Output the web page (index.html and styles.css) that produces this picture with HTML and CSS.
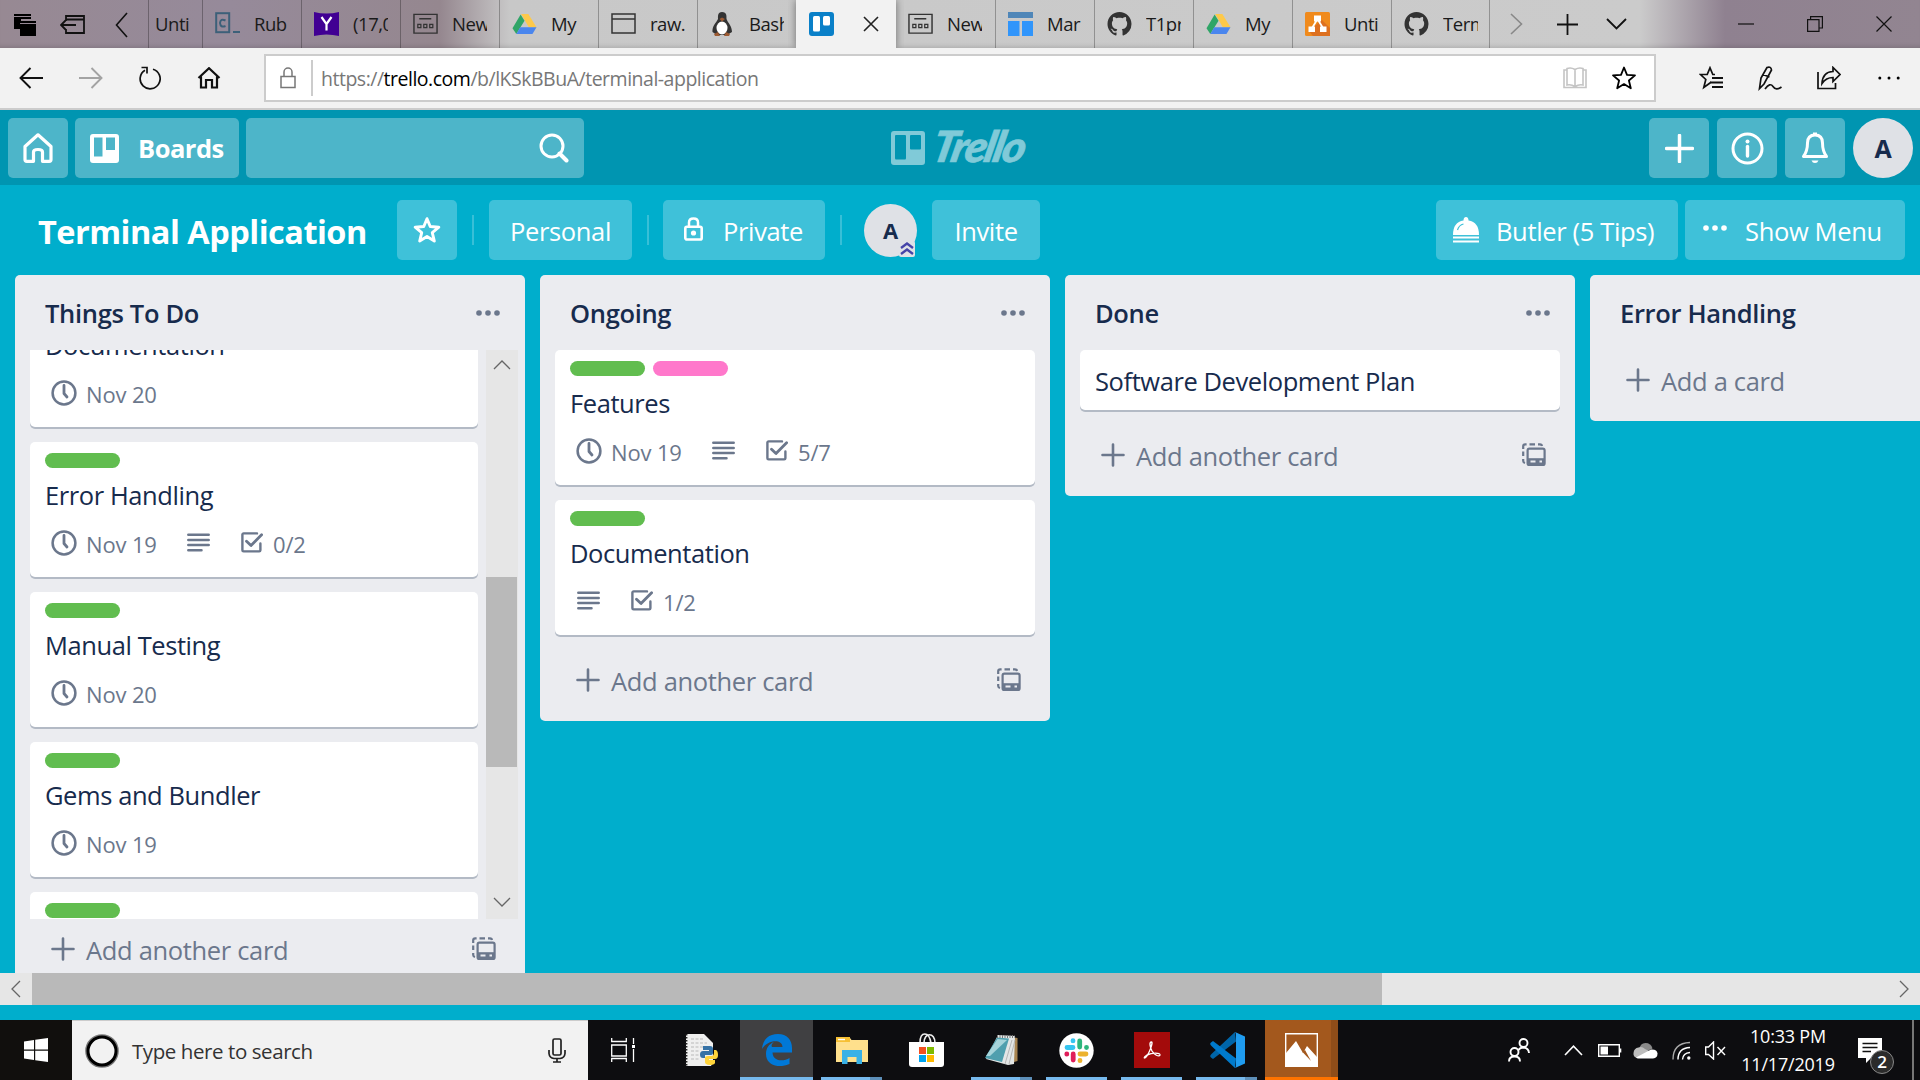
FILE: index.html
```html
<!DOCTYPE html>
<html lang="en">
<head>
<meta charset="utf-8">
<title>Terminal Application | Trello</title>
<link rel="stylesheet" href="styles.css">
</head>
<body>
<svg class="defs" width="0" height="0" aria-hidden="true">
  <symbol id="clock" viewBox="0 0 26 26"><circle cx="13" cy="13" r="11.4" fill="none" stroke="currentColor" stroke-width="2.5"/><path d="M13 5.5V13.5L16 17" fill="none" stroke="currentColor" stroke-width="2.8" stroke-linecap="round" stroke-linejoin="round"/></symbol>
  <symbol id="desc" viewBox="0 0 23 19"><path d="M1.3 1.7H21.7M1.3 6.9H21.7M1.3 12H21.7M1.3 17.2H14.5" fill="none" stroke="currentColor" stroke-width="2.5" stroke-linecap="round"/></symbol>
  <symbol id="check" viewBox="0 0 22 21"><path d="M16 1.4H2.6A1.2 1.2 0 0 0 1.4 2.6V18.2A1.2 1.2 0 0 0 2.6 19.4H18.2A1.2 1.2 0 0 0 19.4 18.2V11.5" fill="none" stroke="currentColor" stroke-width="2.4" stroke-linecap="round"/><path d="M5.5 9.2L10 13.6L20.6 2.8" fill="none" stroke="currentColor" stroke-width="2.8" stroke-linecap="round" stroke-linejoin="round"/></symbol>
  <symbol id="dots" viewBox="0 0 24 6"><circle cx="3" cy="3" r="2.8"/><circle cx="12" cy="3" r="2.8"/><circle cx="21" cy="3" r="2.8"/></symbol>
  <symbol id="plus" viewBox="0 0 24 24"><path d="M12 1.5V22.5M1.5 12H22.5" fill="none" stroke="currentColor" stroke-width="2.6" stroke-linecap="round"/></symbol>
  <symbol id="template" viewBox="0 0 24 24"><path d="M1.2 6V3.2Q1.2 1.3 3.2 1.3H4.6M7.5 1.3H13M16 1.3H18Q19.8 1.3 20 3M1.2 8.5V13M1.2 16V18Q1.3 19.6 3 20" fill="none" stroke="currentColor" stroke-width="2.2"/><rect x="5.6" y="5.6" width="17" height="16.4" rx="1.8" fill="none" stroke="currentColor" stroke-width="2.2"/><path d="M5.6 15.2H22.6V22H5.6Z" fill="currentColor"/><path d="M8.5 18.6H13.5M17.5 18.6H20" stroke="#ebecf0" stroke-width="2"/></symbol>
  <symbol id="newtab" viewBox="0 0 26 24"><path d="M1 2H25V21.500H1ZM6.500 6.500H19" fill="none" stroke="#333" stroke-width="1.500"/><path d="M5 12.500H8.200V15.700H5ZM11.200 12.500H14.400V15.700H11.200ZM17.400 12.500H20.600V15.700H17.400Z" fill="none" stroke="#333" stroke-width="1.300"/></symbol>
  <symbol id="drive" viewBox="0 0 26 24"><path d="M9.500 1.500H17L25.500 15.500H17.500Z" fill="#fdc94b"/><path d="M9 2L.5 16.500L4.500 22.500L13 8.500Z" fill="#2fa567"/><path d="M8.600 15.500H25.500L21.300 22.500H4.500Z" fill="#4a86ee"/></symbol>
  <symbol id="github" viewBox="0 0 16 16"><path fill="#333" d="M8 0C3.580 0 0 3.580 0 8c0 3.540 2.290 6.530 5.470 7.590.4.070.55-.17.55-.38v-1.490c-2.010.37-2.530-.49-2.690-.94-.09-.23-.48-.94-.82-1.130-.28-.15-.68-.52-.01-.53.63-.01 1.080.58 1.230.82.72 1.210 1.870.87 2.330.66.07-.52.28-.87.51-1.070-1.780-.2-3.640-.89-3.640-3.950 0-.87.31-1.590.82-2.150-.08-.2-.36-1.020.08-2.120 0 0 .67-.21 2.200.82.64-.18 1.320-.27 2-.27s1.360.09 2 .27c1.530-1.040 2.200-.82 2.200-.82.44 1.100.16 1.920.08 2.120.51.56.82 1.270.82 2.150 0 3.070-1.870 3.750-3.650 3.950.29.25.54.73.54 1.480v2.200c0 .21.150.46.550.38A8.010 8.010 0 0 0 16 8c0-4.420-3.580-8-8-8z"/></symbol>
  <symbol id="star" viewBox="0 0 26 26"><path d="M13 2.500L16 9.800L24 10.400L17.900 15.500L19.800 23.300L13 19.100L6.200 23.300L8.100 15.500L2 10.400L10 9.800Z" fill="none" stroke="currentColor" stroke-linejoin="round"/></symbol>
</svg>

<div class="screen">
  <div class="tabbar">
    <div class="tab-tools">
      <svg width="22" height="22" viewBox="0 0 22 22"><path d="M0 0H17V5H7V15H0Z"/><path d="M6 7H22V22H6Z"/><path d="M6 9.500H22M0 2.500H17" stroke="#978995" stroke-width="1"/></svg>
      <svg width="25" height="20" viewBox="0 0 25 20"><path d="M6 6V1H24V18H6V14M6 4.500H24M1 10H16M5.500 5.500L1 10L5.500 14.500" fill="none" stroke="#111" stroke-width="1.800"/></svg>
      <svg width="13" height="26" viewBox="0 0 13 26"><path d="M12 1L1.500 13L12 25" fill="none" stroke="#111" stroke-width="1.600"/></svg>
    </div>
    <div class="tab tab-first"><span class="tab-text">Unti</span></div>
    <div class="tab"><svg width="25" height="24" viewBox="0 0 25 24"><rect x="1.200" y="1.200" width="13" height="19" fill="none" stroke="#3c6079" stroke-width="2"/><path d="M10.500 8.500Q5.500 6 5 11Q5.500 16 10.500 14M18 20H25" fill="none" stroke="#3c6079" stroke-width="2"/></svg><span class="tab-text">Rub</span></div>
    <div class="tab"><svg width="25" height="24" viewBox="0 0 25 24"><path d="M0 0Q12.500 3 25 0V24Q12.500 21 0 24Z" fill="#410093"/><path d="M7.500 5L12.500 12V18.500M17.500 5L12.500 12" fill="none" stroke="#fff" stroke-width="2.200"/></svg><span class="tab-text">(17,0</span></div>
    <div class="tab"><svg width="25" height="24"><use href="#newtab"/></svg><span class="tab-text">New</span></div>
    <div class="tab"><svg width="25" height="24"><use href="#drive"/></svg><span class="tab-text">My</span></div>
    <div class="tab"><svg width="25" height="24" viewBox="0 0 25 24"><path d="M1 2H24V21H1ZM1 7H24" fill="none" stroke="#333" stroke-width="1.500"/></svg><span class="tab-text">raw.</span></div>
    <div class="tab"><svg width="25" height="24" viewBox="0 0 25 24"><path d="M12 0C7.500 0 8 4 8 7C6 11 2 14 2.500 20L7 23H17L22 20C22 14 18 11 16.500 7C16.500 4 17 0 12 0Z" fill="#333"/><ellipse cx="12" cy="16" rx="5.500" ry="6.500" fill="#fff"/><path d="M9.500 7L12 5.500L15 7L12 9.500ZM4 22L8 20L10 24H5ZM20 22L16 20L14 24H19Z" fill="#9c5a32"/></svg><span class="tab-text">Bash</span></div>
    <div class="tab tab-active"><svg width="25" height="24" viewBox="0 0 25 24"><rect width="25" height="24" rx="3" fill="#0a80c8"/><rect x="4" y="4" width="7" height="15.500" rx="1.500" fill="#fff"/><rect x="14" y="4" width="7" height="9.500" rx="1.500" fill="#fff"/></svg><svg class="tab-close" width="16" height="16" viewBox="0 0 16 16"><path d="M1 1L15 15M15 1L1 15" stroke="#222" stroke-width="1.600"/></svg></div>
    <div class="tab"><svg width="25" height="24"><use href="#newtab"/></svg><span class="tab-text">New</span></div>
    <div class="tab"><svg width="25" height="24" viewBox="0 0 25 24"><path d="M0 0H25V6H0Z" fill="#4f86b8"/><path d="M0 9H11.500V24H0ZM14 9H25V24H14Z" fill="#3095fb"/></svg><span class="tab-text">Mar</span></div>
    <div class="tab"><svg width="25" height="24"><use href="#github"/></svg><span class="tab-text">T1pr</span></div>
    <div class="tab"><svg width="25" height="24"><use href="#drive"/></svg><span class="tab-text">My</span></div>
    <div class="tab"><svg width="25" height="24" viewBox="0 0 25 24"><rect width="25" height="24" rx="1.500" fill="#f08a1c"/><path d="M17 8L25 16V24H8L4 19Z" fill="#dd7020"/><path d="M12.500 7L6.500 17M12.500 7L18.500 17" stroke="#fff" stroke-width="1.800"/><path d="M9 3.500H16V9.500H9ZM3.500 14.500H10V20H3.500ZM15 14.500H21.500V20H15Z" fill="#fff"/></svg><span class="tab-text">Unti</span></div>
    <div class="tab tab-last"><svg width="25" height="24"><use href="#github"/></svg><span class="tab-text">Term</span></div>
    <div class="tab-end">
      <svg width="13" height="22" viewBox="0 0 13 22"><path d="M1 1L11.500 11L1 21" fill="none" stroke="#888" stroke-width="1.600"/></svg>
      <svg width="21" height="21" viewBox="0 0 21 21"><path d="M10.500 0V21M0 10.500H21" stroke="#111" stroke-width="1.800"/></svg>
      <svg width="21" height="12" viewBox="0 0 21 12"><path d="M1 1L10.500 10.500L20 1" fill="none" stroke="#111" stroke-width="1.800"/></svg>
    </div>
    <div class="window-buttons">
      <svg width="16" height="16" viewBox="0 0 16 16"><path d="M0 8H16" stroke="#111" stroke-width="1.200"/></svg>
      <svg width="16" height="16" viewBox="0 0 16 16"><path d="M.6 3.600H12V15.400H.6ZM3.600 3.600V.6H15.400V12H12" fill="none" stroke="#111" stroke-width="1.200"/></svg>
      <svg width="16" height="16" viewBox="0 0 16 16"><path d="M.5 .5L15.500 15.500M15.500 .5L.5 15.500" stroke="#111" stroke-width="1.200"/></svg>
    </div>
  </div>

  <div class="toolbar">
    <div class="nav">
      <svg width="24" height="22" viewBox="0 0 24 22"><path d="M24 11H1.500M11.500 1L1.500 11L11.500 21" fill="none" stroke="#111" stroke-width="1.900"/></svg>
      <svg width="24" height="22" viewBox="0 0 24 22"><path d="M0 11H22.500M12.500 1L22.500 11L12.500 21" fill="none" stroke="#a3a3a3" stroke-width="1.900"/></svg>
      <svg width="22" height="24" viewBox="0 0 22 24"><path d="M14 3.200A10 10 0 1 1 6 4.200M2.500 1.500H8V7.500" fill="none" stroke="#111" stroke-width="1.700"/></svg>
      <svg width="24" height="22" viewBox="0 0 24 22"><path d="M1.500 11L12 1.200L22.500 11M4 9.500V20.500H9V13H15V20.500H20V9.500" fill="none" stroke="#111" stroke-width="2.200"/></svg>
    </div>
    <div class="address">
      <svg width="16" height="22" viewBox="0 0 16 22"><path d="M1 9.500H15V20.500H1ZM4 9.500V5A4 4 0 0 1 12 5V9.500" fill="none" stroke="#777" stroke-width="1.500"/></svg>
      <span class="address-rule"></span>
      <span class="url">https://<b>trello.com</b>/b/lKSkBBuA/terminal-application</span>
      <svg width="24" height="22" viewBox="0 0 24 22"><path d="M12 2.500Q8 0 4 1.500V18Q8 17 12 19.500Q16 17 20 18V1.500Q16 0 12 2.500V19.500M4 3H1V20.500H23V3H20" fill="none" stroke="#c4c4c4" stroke-width="1.600"/></svg>
      <svg class="fav" width="26" height="26"><use href="#star" stroke-width="1.800"/></svg>
    </div>
    <div class="actions">
      <svg width="24" height="24" viewBox="0 0 24 24"><path d="M16 8.500H13.800L11 1.800L8.200 8.500H1.500L6.800 13.500L4.800 21.500L11 17M11 17L12 16" fill="none" stroke="#111" stroke-width="1.700"/><path d="M13 12H24M11 16.500H24M13 21H24" stroke="#111" stroke-width="1.800"/></svg>
      <svg width="24" height="26" viewBox="0 0 24 26"><path d="M9 2.500L3 13L1.500 23.500L6 19L13.500 5Q13 1 9 2.500ZM5 9.500L11.500 12M7 24Q12 17 15 21.500Q18 26 23.500 22" fill="none" stroke="#111" stroke-width="1.700"/></svg>
      <svg width="24" height="24" viewBox="0 0 24 24"><path d="M1 6V22.500H18.500V17" fill="none" stroke="#111" stroke-width="1.700"/><path d="M5 17.500Q5.500 6 16 5.500V1.500L23 8.500L16 15.500V11.500Q9 11.500 5 17.500Z" fill="none" stroke="#111" stroke-width="1.700"/></svg>
      <svg class="more" width="22" height="4" viewBox="0 0 22 4"><circle cx="1.800" cy="2" r="1.500"/><circle cx="11" cy="2" r="1.500"/><circle cx="20.200" cy="2" r="1.500"/></svg>
    </div>
  </div>

  <div class="site-header">
    <div class="head-group">
      <div class="hbtn square"><svg width="30" height="30" viewBox="0 0 30 30"><path d="M2 13.500L15 1.800L28 13.500V26.500Q28 28.300 26.200 28.300H19.500V19Q19.500 16.500 15 16.500Q10.500 16.500 10.500 19V28.300H3.800Q2 28.300 2 26.500Z" fill="none" stroke="#fff" stroke-width="3.200" stroke-linejoin="round"/></svg></div>
      <div class="hbtn boards"><svg width="29" height="29" viewBox="0 0 29 29"><path fill-rule="evenodd" d="M3 0H26Q29 0 29 3V26Q29 29 26 29H3Q0 29 0 26V3Q0 0 3 0ZM4 3.500V22.500H12.500V3.500ZM16 3.500V16H25V3.500Z" fill="#fff"/></svg><span>Boards</span></div>
      <div class="search"><svg width="30" height="30" viewBox="0 0 30 30"><circle cx="13" cy="13" r="11" fill="none" stroke="#fff" stroke-width="3"/><path d="M20.500 20.500L27.500 27.500" stroke="#fff" stroke-width="4" stroke-linecap="round"/></svg></div>
    </div>
    <div class="logo"><svg width="34" height="34" viewBox="0 0 34 34"><path fill-rule="evenodd" d="M3 0H31Q34 0 34 3V31Q34 34 31 34H3Q0 34 0 31V3Q0 0 3 0ZM5 4Q4 4 4 5V27Q4 28.500 5 28.500H14Q15 28.500 15 27V5Q15 4 14 4ZM20 4Q19 4 19 5V17.500Q19 18.500 20 18.500H29Q30 18.500 30 17.500V5Q30 4 29 4Z" fill="#80cad8"/></svg><span class="wordmark">Trello</span></div>
    <div class="head-group head-right">
      <div class="hbtn square"><svg width="29" height="29" viewBox="0 0 29 29"><path d="M14.500 1.500V27.500M1.500 14.500H27.500" stroke="#fff" stroke-width="3.500" stroke-linecap="round"/></svg></div>
      <div class="hbtn square"><svg width="33" height="33" viewBox="0 0 33 33"><circle cx="16.500" cy="16.500" r="14.500" fill="none" stroke="#fff" stroke-width="3"/><circle cx="16.500" cy="9.500" r="2" fill="#fff"/><path d="M16.500 14.500V24" stroke="#fff" stroke-width="3.400" stroke-linecap="round"/></svg></div>
      <div class="hbtn square"><svg width="28" height="32" viewBox="0 0 28 32"><path d="M14 3Q6.500 3 6.500 11Q6.500 19 2.500 24.500H25.500Q21.500 19 21.500 11Q21.500 3 14 3Z" fill="none" stroke="#fff" stroke-width="3" stroke-linejoin="round"/><path d="M10.500 28.500H17.500Q16.500 31 14 31Q11.500 31 10.500 28.500ZM12 .5H16V3H12Z" fill="#fff"/></svg></div>
      <div class="avatar">A</div>
    </div>
  </div>

  <div class="board-header">
    <h1>Terminal Application</h1>
    <div class="bbtn star-btn"><svg width="28" height="28"><use href="#star" stroke-width="2.700"/></svg></div>
    <span class="rule"></span>
    <div class="bbtn personal">Personal</div>
    <span class="rule"></span>
    <div class="bbtn private"><svg width="19" height="24" viewBox="0 0 19 24"><rect x="1.300" y="9.800" width="16.400" height="12.700" rx="1.600" fill="none" stroke="#fff" stroke-width="2.600"/><path d="M5 9.500V5.500Q5 1.500 9.500 1.500Q14 1.500 14 5.500V9.500" fill="none" stroke="#fff" stroke-width="2.500"/><circle cx="9.500" cy="16" r="2.600" fill="#fff"/></svg><span>Private</span></div>
    <span class="rule"></span>
    <div class="member"><span>A</span><svg class="member-badge" width="16" height="16" viewBox="0 0 16 16"><rect width="16" height="16" rx="2" fill="#dfe1e6"/><path d="M2 7L8 2.500L14 7M2 13L8 8.500L14 13" fill="none" stroke="#4544a8" stroke-width="2.300"/></svg></div>
    <div class="bbtn invite">Invite</div>
    <span class="spacer"></span>
    <div class="bbtn butler"><svg width="28" height="28" viewBox="0 0 28 28"><path d="M1 18Q1 5 11.500 3.500Q11.500 0 14 0Q16.500 0 16.500 3.500Q27 5 27 18Z" fill="#fff"/><path d="M5.500 13Q7 8 11.500 7" fill="none" stroke="#3fc1d9" stroke-width="1.200"/><path d="M1 20.500H27M1 24.500H27" stroke="#fff" stroke-width="2"/></svg><span>Butler (5 Tips)</span></div>
    <div class="bbtn menu"><svg width="24" height="6" fill="#fff"><use href="#dots"/></svg><span>Show Menu</span></div>
  </div>

  <div class="board">
    <section class="list list-tall">
      <header><h2>Things To Do</h2><svg width="24" height="6"><use href="#dots"/></svg></header>
      <div class="scroller">
        <div class="cards">
          <article class="card"><div class="labels"><i class="green"></i></div><h3>Documentation</h3><div class="badges"><svg width="26" height="26"><use href="#clock"/></svg><span class="due">Nov 20</span></div></article>
          <article class="card"><div class="labels"><i class="green"></i></div><h3>Error Handling</h3><div class="badges"><svg width="26" height="26"><use href="#clock"/></svg><span class="due">Nov 19</span><svg class="desc" width="23" height="19"><use href="#desc"/></svg><svg width="22" height="21"><use href="#check"/></svg><span>0/2</span></div></article>
          <article class="card"><div class="labels"><i class="green"></i></div><h3>Manual Testing</h3><div class="badges"><svg width="26" height="26"><use href="#clock"/></svg><span class="due">Nov 20</span></div></article>
          <article class="card"><div class="labels"><i class="green"></i></div><h3>Gems and Bundler</h3><div class="badges"><svg width="26" height="26"><use href="#clock"/></svg><span class="due">Nov 19</span></div></article>
          <article class="card"><div class="labels"><i class="green"></i></div></article>
        </div>
        <div class="vbar">
          <svg width="18" height="10" viewBox="0 0 18 10"><path d="M1 9L9 1L17 9" fill="none" stroke="#666" stroke-width="1.300"/></svg>
          <span class="vthumb"></span>
          <svg width="18" height="10" viewBox="0 0 18 10"><path d="M1 1L9 9L17 1" fill="none" stroke="#666" stroke-width="1.300"/></svg>
        </div>
      </div>
      <footer><svg width="24" height="24"><use href="#plus"/></svg><span>Add another card</span><svg class="tpl" width="24" height="24"><use href="#template"/></svg></footer>
    </section>

    <section class="list">
      <header><h2>Ongoing</h2><svg width="24" height="6"><use href="#dots"/></svg></header>
      <div class="cards">
        <article class="card"><div class="labels"><i class="green"></i><i class="pink"></i></div><h3>Features</h3><div class="badges"><svg width="26" height="26"><use href="#clock"/></svg><span class="due">Nov 19</span><svg class="desc" width="23" height="19"><use href="#desc"/></svg><svg width="22" height="21"><use href="#check"/></svg><span>5/7</span></div></article>
        <article class="card"><div class="labels"><i class="green"></i></div><h3>Documentation</h3><div class="badges badges-nodue"><svg class="desc" width="23" height="19"><use href="#desc"/></svg><svg width="22" height="21"><use href="#check"/></svg><span>1/2</span></div></article>
      </div>
      <footer><svg width="24" height="24"><use href="#plus"/></svg><span>Add another card</span><svg class="tpl" width="24" height="24"><use href="#template"/></svg></footer>
    </section>

    <section class="list">
      <header><h2>Done</h2><svg width="24" height="6"><use href="#dots"/></svg></header>
      <div class="cards"><article class="card card-plain"><h3>Software Development Plan</h3></article></div>
      <footer><svg width="24" height="24"><use href="#plus"/></svg><span>Add another card</span><svg class="tpl" width="24" height="24"><use href="#template"/></svg></footer>
    </section>

    <section class="list">
      <header><h2>Error Handling</h2></header>
      <footer><svg width="24" height="24"><use href="#plus"/></svg><span>Add a card</span></footer>
    </section>
  </div>

  <div class="hbar">
    <svg width="10" height="18" viewBox="0 0 10 18"><path d="M9 1L1 9L9 17" fill="none" stroke="#666" stroke-width="1.300"/></svg>
    <span class="hthumb"></span>
    <svg width="10" height="18" viewBox="0 0 10 18"><path d="M1 1L9 9L1 17" fill="none" stroke="#666" stroke-width="1.300"/></svg>
  </div>

  <div class="taskbar">
    <div class="start"><svg width="24" height="24" viewBox="0 0 24 24"><path d="M0 3.500L10 2V11.500H0ZM11.200 1.800L24 0V11.500H11.200ZM0 12.700H10V22L0 20.500ZM11.200 12.700H24V24L11.200 22.200Z" fill="#fff"/></svg></div>
    <div class="tsearch"><svg width="34" height="34" viewBox="0 0 34 34"><circle cx="17" cy="17" r="15" fill="none" stroke="#777" stroke-width="3.600"/><circle cx="17" cy="17" r="14" fill="none" stroke="#000" stroke-width="3"/></svg><span>Type here to search</span><svg width="18" height="25" viewBox="0 0 18 25"><rect x="5" y="1" width="8" height="16" rx="1.500" fill="none" stroke="#222" stroke-width="1.700"/><path d="M1 12V15.500Q1.500 20 6 20.500H12Q16.500 20 17 15.500V12M9 20.500V24M5 24H13" fill="none" stroke="#222" stroke-width="1.700"/></svg></div>
    <div class="task task-view"><svg width="25" height="24" viewBox="0 0 25 24"><path d="M.7 0V3.500H15.300V0M.7 7H15.300V18H.7ZM.7 24V20.500H15.300V24M22.500 0V6M22.500 11V24" fill="none" stroke="#fff" stroke-width="1.300"/><path d="M21 7H24V10H21Z" fill="#fff"/></svg></div>
    <div class="task python"><svg width="34" height="35" viewBox="0 0 34 35"><path d="M1 1H19L28 10V29L26 33H1Z" fill="#efefef"/><path d="M1.500 1V33" stroke="#222" stroke-width="1.800" stroke-dasharray="1.500 1.500"/><path d="M6 6H18M6 10H22M6 14H20M6 18H15M6 22H15M6 26H14" stroke="#ccc" stroke-width="1.400" stroke-dasharray="3 1.500"/><path d="M18 13H25Q28 13 28 16V20Q28 22 25 22H20V25H18Q15 25 15 21.500Q15 18 18 18H24V17H18Z" fill="#3672a6"/><path d="M29 17H31Q33 18 33 22Q33 26 30 26H24V27H30V30Q29 32 24.500 32Q20 31.500 20 29V25Q20 23 23 23H27Q29 22.500 29 20Z" fill="#ffd43b"/></svg></div>
    <div class="task edge"><svg width="30" height="32" viewBox="0 0 30 32"><path d="M0 15C1 5 7 0 16 0C25 0 30 6 30 14V18.500H10.500C11 28 22 27.500 27.500 24V30C16 35 4 31 4 20C4 14 7 10 12 8C9 10 9.500 12.500 10 13H20.500C20.500 5 6 5 0 15Z" fill="#0078d7"/></svg></div>
    <div class="task run stacked"><svg width="32" height="27" viewBox="0 0 32 27"><path d="M0 1H14L15.500 3H32V25H0Z" fill="#ffe08c"/><path d="M0 0H14V5H0Z" fill="#f7c033"/><path d="M2 2.500H9" stroke="#fff" stroke-width="1.400"/><path d="M6 13H26V27H20.500V20H11.500V27H6Z" fill="#39b1e6"/></svg></div>
    <div class="task"><svg width="35" height="34" viewBox="0 0 35 34"><path d="M11 10C11 -2 20 -2 22 10M15 10C15 -1 26 -1 26 10" fill="none" stroke="#eee" stroke-width="1.600"/><path d="M0 9H35V31Q35 34 32 34H3Q0 34 0 31Z" fill="#fff"/><path d="M10 14H17V21H10Z" fill="#f25022"/><path d="M18 14H25V21H18Z" fill="#7fba00"/><path d="M10 22H17V29H10Z" fill="#00a4ef"/><path d="M18 22H25V29H18Z" fill="#ffb900"/></svg></div>
    <div class="task run stacked"><svg width="33" height="32" viewBox="0 0 33 32"><path d="M26 3L32.500 4V27L29 28Z" fill="#a88450"/><path d="M13 1L30 2L29 30L23 31L1 25Z" fill="#e3e6e6"/><path d="M12 3.500L24 4.500L17 28L0 24Z" fill="#4f9fae"/><path d="M12.500 5L22 6L5 22L1 22Z" fill="#a6d4da"/><path d="M12 2.500H30" stroke="#777" stroke-width="3" stroke-dasharray="1 1.500"/><path d="M27 6L20 30M30 6L24 30" stroke="#aaa" stroke-width=".8"/></svg></div>
    <div class="task run"><svg width="35" height="35" viewBox="0 0 35 35"><circle cx="17.500" cy="17.500" r="17.200" fill="#fff"/><g fill="none" stroke-width="4.800" stroke-linecap="round"><path d="M8 14.500H14M14 7.700V7.900" stroke="#36c5f0"/><path d="M20.700 8V14M27.500 14.300V14.500" stroke="#2eb67d"/><path d="M21 21H27M21 27.500V27.700" stroke="#ecb22e"/><path d="M14.200 21V27M7.800 21V21.200" stroke="#e01e5a"/></g></svg></div>
    <div class="task run"><svg width="36" height="36" viewBox="0 0 36 36"><path d="M0 0H36V36H0Z" fill="#a30b0b"/><path d="M17.500 10C15 10 16 15 18 19C20 22.500 25 25.500 26 23C26.500 20.500 18 20.500 13 23C9 25.500 10 27 12 25C15 22 19.500 10 17.500 10Z" fill="none" stroke="#fff" stroke-width="1.400"/></svg></div>
    <div class="task run stacked"><svg width="36" height="36" viewBox="0 0 36 36"><path d="M26 0L3 21.500Q0 24 2 25.500L4 27L27 9.500Z" fill="#0065a9"/><path d="M26 36L3 14.500Q0 12 2 10.500L4 9L27 26.500Z" fill="#007acc"/><path d="M26 0L36 4.500V31.500L26 36Q27 35 27 33V3Q27 1 26 0Z" fill="#1f9cf0"/></svg></div>
    <div class="task photos"><svg width="33" height="34" viewBox="0 0 33 34"><path d="M.7 .7H32.300V33.300H.7Z" fill="none" stroke="#fff" stroke-width="1.400"/><path d="M1 20L11 8L18 20L22 13L32 24V33H1Z" fill="#fff"/><path d="M17.500 19L26 28L20 17Z" fill="#a3581d"/></svg></div>
    <span class="spacer"></span>
    <div class="tray">
      <svg width="22" height="24" viewBox="0 0 22 24"><g fill="none" stroke="#fff" stroke-width="1.900"><circle cx="15.500" cy="5" r="4"/><circle cx="6.500" cy="14" r="4"/><path d="M10.500 12Q12 9.500 15.500 9.500Q20.500 10 21 15M1 23.500Q1 18.500 6.500 18.500Q12 18.500 12 23.500"/></g></svg>
      <svg class="chev" width="19" height="11" viewBox="0 0 19 11"><path d="M1 10L9.500 1.200L18 10" fill="none" stroke="#fff" stroke-width="1.600"/></svg>
      <svg class="battery" width="24" height="13" viewBox="0 0 24 13"><path d="M.7 .7H21.300V12.300H.7Z" fill="none" stroke="#fff" stroke-width="1.400"/><path d="M2.500 2.500H10V10.500H2.500ZM22 4.500H23.300V8.500H22Z" fill="#fff"/></svg>
      <svg width="25" height="17" viewBox="0 0 25 17"><path d="M6 8Q7 1 12.500 1Q18 1 19.500 6.500L12 10Z" fill="#8a8a8a"/><path d="M4 16Q0 15 .5 11Q1 6 5.500 5.500Q9 4 12 7L20 11L10 16Z" fill="#bdbdbd"/><path d="M3 15.500L18 7.500Q24 7 24.500 11.500Q24.500 16 20 16.500H5Q4 16.500 3 15.500Z" fill="#fff"/></svg>
      <svg width="19" height="19" viewBox="0 0 19 19"><g fill="none" stroke-width="1.400"><path d="M1 18.500Q1 2 18 1.500" stroke="#aaa"/><path d="M6 18.500Q6 7 18 6.500M10.500 18.500Q11 12 18 11.500" stroke="#fff"/></g><circle cx="16.800" cy="17" r="1.700" fill="#fff"/></svg>
      <svg width="21" height="19" viewBox="0 0 21 19"><path d="M.7 6V13.500H3.500L8.500 18V1L3.500 6ZM12.500 6L20 14M20 6L12.500 14" fill="none" stroke="#fff" stroke-width="1.400"/></svg>
    </div>
    <div class="datetime"><span class="time">10:33 PM</span><span>11/17/2019</span></div>
    <div class="notice"><svg width="25" height="26" viewBox="0 0 25 26"><path d="M0 0H24V20H13L8 25V20H0Z" fill="#fff"/><path d="M4.500 5.500H19.500M4.500 9.500H19.500M4.500 13.500H13" stroke="#111" stroke-width="1.300"/></svg><span class="count">2</span></div>
    <span class="peek"></span>
  </div>
</div>
</body>
</html>
```
FILE: styles.css
```css
* { box-sizing: border-box; }
body { margin: 0; font-family: "Open Sans", "Noto Sans", sans-serif; }
h1, h2, h3 { margin: 0; font-size: inherit; font-weight: inherit; }
svg { display: block; flex: none; }
.defs { position: absolute; }
.spacer { flex: 1; }

.screen { width: 1920px; height: 1080px; overflow: hidden; background: #00aecc; display: flex; flex-direction: column; }

/* browser tabs */
.tabbar { height: 48px; flex: none; display: flex; background: linear-gradient(90deg, #978993 0, #968a9a 230px, #95878f 440px, #c8c8c8 510px, #cbcbcb 1640px, #8f8190 1725px, #928591 1920px); box-shadow: inset 0 -5px 5px -4px rgba(0,0,0,.16); }
.tab-tools { width: 148px; display: flex; align-items: center; padding: 1px 0 0 14px; gap: 24px; }
.tab-tools svg:last-child { margin-left: 6px; }
.tab { width: 99px; border-left: 1px solid rgba(0,0,0,.28); display: flex; align-items: center; padding-left: 12px; gap: 14px; }
.tab-first { width: 54px; padding-left: 6px; }
.tab-active { width: 100px; background: #f2f2f2; border: 0; padding-left: 13px; box-shadow: 0 0 8px rgba(0,0,0,.45); clip-path: inset(0 -8px); }
.tab-active + .tab { border-left-color: transparent; padding-left: 11px; }
.tab-close { margin-left: 15px; }
.tab-last { border-right: 1px solid rgba(0,0,0,.28); }
.tab-text { width: 35px; overflow: hidden; white-space: nowrap; font-size: 18.5px; letter-spacing: -.45px; line-height: 30px; color: #1a1a1a; }
.tab-end { display: flex; align-items: center; padding-left: 20px; gap: 34px; width: 230px; }
.tab-end svg:last-child { margin-left: -6px; }
.window-buttons { display: flex; align-items: center; gap: 53px; padding-left: 18px; }

/* toolbar */
.toolbar { height: 62px; flex: none; background: #f2f2f2; border-bottom: 2px solid #ccc; display: flex; align-items: center; }
.nav { width: 264px; display: flex; align-items: center; gap: 36px; padding-left: 19px; }
.address { width: 1392px; height: 48px; background: #fff; border: 2px solid #ccc; display: flex; align-items: center; padding: 0 17px 0 14px; }
.address-rule { width: 2px; height: 36px; background: #ccc; margin: 0 8px 0 15px; }
.url { flex: 1; font-size: 19.5px; letter-spacing: -.49px; color: #777; padding-top: 1px; }
.url b { font-weight: 400; color: #000; }
.fav { margin-left: 24px; }
.actions { display: flex; align-items: center; gap: 35px; padding-left: 43px; }
.actions .more { margin-left: 2px; }

/* site header */
.site-header { height: 75px; flex: none; background: #0095b1; display: grid; grid-template-columns: 1fr auto 1fr; align-items: center; padding: 1px 7px 0 8px; }
.head-group { display: flex; gap: 7px; }
.head-right { justify-content: flex-end; gap: 8px; }
.hbtn, .search { height: 60px; border-radius: 5px; background: #4db5c9; display: flex; align-items: center; }
.square { width: 60px; justify-content: center; }
.boards { width: 164px; padding-left: 15px; gap: 19px; color: #fff; font-weight: 700; font-size: 25.500px; letter-spacing: -.5px; }
.search { width: 338px; justify-content: flex-end; padding-right: 15px; }
.logo { display: flex; align-items: center; gap: 6px; width: 140px; height: 60px; color: #80cad8; }
.logo svg { margin-top: -1px; }
.wordmark { font: italic 900 43px/60px Lato, sans-serif; letter-spacing: -2px; margin-top: -5px; transform: scaleX(1.03) skewX(-12deg); transform-origin: 0 70%; -webkit-text-stroke: .7px #80cad8; }
.avatar { width: 60px; height: 60px; border-radius: 50%; background: #dfe1e6; color: #172b4d; font-weight: 700; font-size: 25px; display: flex; align-items: center; justify-content: center; }

/* board header */
.board-header { height: 90px; flex: none; display: flex; align-items: center; padding: 0 15px 0 38px; color: #fff; font-size: 25.500px; letter-spacing: -.35px; }
.board-header h1 { width: 359px; padding-top: 2px; font-size: 32.500px; font-weight: 700; letter-spacing: -.52px; white-space: nowrap; }
.bbtn { height: 60px; border-radius: 5px; background: #3fc1d9; display: flex; align-items: center; white-space: nowrap; padding-top: 1px; }
.rule { width: 2px; height: 30px; background: #38bfd7; margin: 0 15px; }
.star-btn { width: 60px; justify-content: center; padding: 0; }
.personal { width: 143px; justify-content: center; }
.private { width: 162px; padding-left: 21px; gap: 20px; margin-left: -1px; }
.private svg { margin-top: -3px; }
.member { position: relative; width: 53px; height: 53px; margin: 0 15px 0 7px; border-radius: 50%; background: #dfe1e6; color: #172b4d; font-weight: 700; font-size: 22px; display: flex; align-items: center; justify-content: center; }
.member-badge { position: absolute; right: 2px; bottom: 0; }
.invite { width: 108px; justify-content: center; }
.butler { width: 242px; padding-left: 16px; gap: 16px; margin-right: 7px; }
.menu { width: 220px; padding-left: 18px; gap: 18px; }
.menu svg { margin-top: -5px; }

/* lists */
.board { height: 698px; flex: none; display: flex; align-items: flex-start; gap: 15px; padding-left: 15px; overflow: hidden; }
.list { width: 510px; flex: none; background: #ebecf0; border-radius: 5px; color: #172b4d; font-size: 25.500px; letter-spacing: -.42px; }
.list header { height: 75px; display: flex; align-items: center; justify-content: space-between; padding: 0 25px 0 30px; }
.list header svg { fill: #6b778c; }
.list h2 { font-weight: 600; letter-spacing: -.32px; }
.cards { padding: 0 15px; }
.card { height: 135px; margin-bottom: 15px; padding: 11px 15px 0; background: #fff; border-radius: 5px; box-shadow: 0 2px 0 #b3bac5; }
.card h3 { height: 37px; line-height: 37px; margin-top: 9px; }
.card-plain { height: 60px; padding-top: 13px; }
.card-plain h3 { margin-top: 0; }
.labels { display: flex; gap: 8px; height: 15px; }
.labels i { width: 75px; border-radius: 8px; }
.green { background: #61bd4f; }
.pink { background: #ff78cb; }
.badges { height: 37px; margin-top: 10px; padding-left: 6px; display: flex; align-items: center; color: #6b778c; font-size: 22px; letter-spacing: -.15px; }
.badges-nodue { padding-left: 7px; }
.badges span { margin: 2px 0 0 10px; }
.badges .due { width: 101px; margin-left: 9px; }
.badges .desc { margin-right: 31px; }
.list footer { height: 71px; padding: 0 29px 9px 36px; display: flex; align-items: center; color: #6b778c; letter-spacing: -.33px; }
.list footer svg { margin-top: -2px; }
.list footer span { margin-left: 11px; flex: 1; }
.scroller { height: 569px; display: flex; justify-content: space-between; overflow: hidden; padding-right: 7px; }
.scroller .cards { width: 463px; padding-right: 0; margin-top: -58px; }
.list-tall { height: 760px; }
.vbar { width: 32px; background: #e6e6e6; display: flex; flex-direction: column; align-items: center; padding: 10px 0; }
.vthumb { width: 31px; height: 190px; margin: 207px 1px 130px 0; background: #b9b9b9; flex: none; }

.hbar { height: 32px; flex: none; margin-bottom: 15px; background: #e6e6e6; display: flex; align-items: center; padding: 0 11px; }
.hthumb { width: 1350px; height: 32px; margin: 0 auto 0 11px; background: #b9b9b9; }

/* taskbar */
.taskbar { height: 60px; flex: none; display: flex; background: #0d0d10; }
.start { width: 72px; background: #110f0d; display: flex; align-items: center; justify-content: center; }
.tsearch { width: 516px; background: #f2f2f2; border-top: 1px solid #ccc; display: flex; align-items: center; padding: 0 22px 0 13px; color: #333; font-size: 20.500px; letter-spacing: -.42px; }
.tsearch span { flex: 1; margin-left: 13px; padding-top: 1px; }
.task { width: 61px; margin-right: 14px; display: flex; align-items: center; justify-content: center; }
.task-view { margin-left: 5px; }
.python { margin-left: 3px; }
.task.edge { width: 73px; margin: 0 8px 0 -6px; background: #404042; border-bottom: 3px solid #76b9ed; padding-top: 3px; }
.run { border-bottom: 3px solid #76b9ed; padding-top: 3px; }
.stacked { border-image: linear-gradient(90deg, #76b9ed 77%, #5d8fb9 77%) 3; border-width: 0 0 3px; border-style: solid; }
.task.photos { width: 73px; margin: 0 0 0 -6px; padding: 2px 0 0; background: linear-gradient(90deg, #a3581d 66px, #8f4d19 66px); border-bottom: 3px solid #ff7300; }
.tray { display: flex; align-items: center; color: #fff; }
.tray svg { margin-right: 14px; }
.tray svg.chev { margin: 0 15px 0 20px; }
.tray svg.battery { margin-right: 11px; }
.datetime { width: 96px; display: flex; flex-direction: column; align-items: center; justify-content: center; font-size: 18px; line-height: 28px; letter-spacing: -.2px; color: #fff; }
.notice { position: relative; width: 76px; padding: 18px 0 0 22px; }
.count { position: absolute; left: 34px; top: 30px; width: 24px; height: 24px; border-radius: 50%; border: 1px solid #888; background: #2b2b2b; color: #fff; font-size: 17px; font-weight: 600; line-height: 22px; text-align: center; }
.peek { width: 8px; border-left: 2px solid #777; }
```
